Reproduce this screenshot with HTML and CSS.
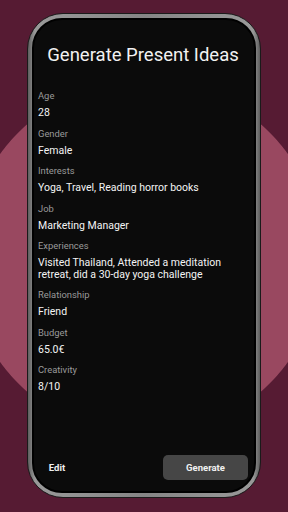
FILE: index.html
```html
<!DOCTYPE html>
<html lang="en">
<head>
  <meta charset="UTF-8">
  <title>Generate Present Ideas</title>
  <link rel="stylesheet" href="styles.css">
</head>
<body>
  <div class="phone">
    <div class="screen">
      <h1 class="title">Generate Present Ideas</h1>

      <div class="fields">
        <div class="field">
          <div class="label">Age</div>
          <div class="value">28</div>
        </div>
        <div class="field">
          <div class="label">Gender</div>
          <div class="value">Female</div>
        </div>
        <div class="field">
          <div class="label">Interests</div>
          <div class="value">Yoga, Travel, Reading horror books</div>
        </div>
        <div class="field">
          <div class="label">Job</div>
          <div class="value">Marketing Manager</div>
        </div>
        <div class="field">
          <div class="label">Experiences</div>
          <div class="value">Visited Thailand, Attended a meditation retreat, did a 30-day yoga challenge</div>
        </div>
        <div class="field">
          <div class="label">Relationship</div>
          <div class="value">Friend</div>
        </div>
        <div class="field">
          <div class="label">Budget</div>
          <div class="value">65.0€</div>
        </div>
        <div class="field">
          <div class="label">Creativity</div>
          <div class="value">8/10</div>
        </div>
      </div>

      <div class="actions">
        <button class="text-btn">Edit</button>
        <button class="primary">Generate</button>
      </div>
    </div>
  </div>
</body>
</html>
```

FILE: styles.css
```css
html, body {
  height: 100%;
}

body {
  margin: 0;
  overflow: hidden;
  background: radial-gradient(circle 178px at 144px 258px, #994860 99.5%, #561b33 100%);
  background-color: #561b33;
  font-family: Roboto, 'Noto Sans', sans-serif;
  padding-top: 13px;
  box-sizing: border-box;
}

.phone {
  width: 234px;
  height: 485px;
  margin: 0 auto;
  box-sizing: border-box;
  padding: 4px;
  border: 1px solid #1a1a1a;
  border-radius: 36px;
  background: linear-gradient(90deg, #5e5e5e, #999 3%, #858585 50%, #999 97%, #5e5e5e);
}

.screen {
  height: 100%;
  box-sizing: border-box;
  border: 2px solid #000;
  border-radius: 30px;
  background-color: #0b0b0b;
  display: flex;
  flex-direction: column;
  padding: 0 6px 11px 4px;
}

.title {
  margin: 24px 0 0;
  font-size: 18.5px;
  font-weight: 400;
  line-height: 22px;
  color: #f2f2f2;
  text-align: center;
}

.fields {
  margin-top: 24px;
  display: flex;
  flex-direction: column;
  gap: 9px;
}

.label {
  font-size: 9.4px;
  line-height: 11px;
  color: #9a9a9a;
}

.value {
  margin-top: 6px;
  font-size: 10.5px;
  line-height: 11.5px;
  color: #f4f4f4;
}

.actions {
  margin-top: auto;
  display: flex;
  justify-content: space-between;
  align-items: center;
}

button {
  font-family: Roboto, sans-serif;
  font-size: 9.5px;
  font-weight: 700;
  color: #f0f0f0;
  border: none;
  cursor: pointer;
}

.text-btn {
  background: none;
  width: 36px;
  height: 26px;
  padding: 0;
  margin-left: 1px;
}

.primary {
  width: 85px;
  height: 25px;
  border-radius: 5px;
  background-color: #464646;
}
```
